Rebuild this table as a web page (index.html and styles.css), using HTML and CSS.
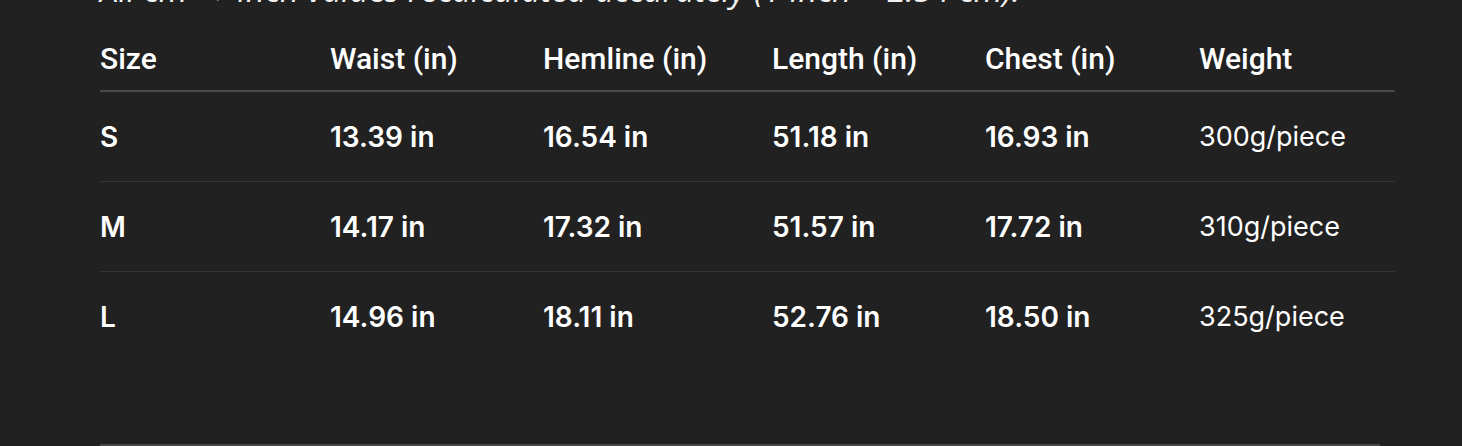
FILE: index.html
```html
<!DOCTYPE html>
<html lang="en">
<head>
<meta charset="utf-8">
<title>Size chart</title>
<link rel="stylesheet" href="styles.css">
</head>
<body>
<main class="page">
  <p class="note">All cm → inch values recalculated accurately (1 inch = 2.54 cm).</p>
  <table class="size-table">
    <thead>
      <tr>
        <th class="c-size">Size</th>
        <th class="c-waist">Waist (in)</th>
        <th class="c-hem">Hemline (in)</th>
        <th class="c-len">Length (in)</th>
        <th class="c-chest">Chest (in)</th>
        <th class="c-weight">Weight</th>
      </tr>
    </thead>
    <tbody>
      <tr>
        <td>S</td><td>13.39 in</td><td>16.54 in</td><td>51.18 in</td><td>16.93 in</td><td class="w">300g/piece</td>
      </tr>
      <tr>
        <td>M</td><td>14.17 in</td><td>17.32 in</td><td>51.57 in</td><td>17.72 in</td><td class="w">310g/piece</td>
      </tr>
      <tr>
        <td>L</td><td>14.96 in</td><td>18.11 in</td><td>52.76 in</td><td>18.50 in</td><td class="w">325g/piece</td>
      </tr>
    </tbody>
  </table>
  <div class="divider"></div>
</main>
</body>
</html>
```

FILE: styles.css
```css
html, body {
  margin: 0;
  padding: 0;
  background: #212121;
  overflow: hidden;
}

.page {
  padding: 0 67px 0 100px;
  margin-top: -25px;
  color: #ffffff;
  font-family: Inter, "Noto Sans", sans-serif;
}

.note {
  margin: 0;
  height: 30px;
  font-family: "Open Sans", sans-serif;
  font-style: italic;
  font-size: 33px;
  line-height: 30px;
  white-space: nowrap;
  color: #f2f2f2;
}

.size-table {
  width: 1295px;
  border-collapse: collapse;
  margin-top: 18px;
}

.size-table th {
  text-align: left;
  font-family: Roboto, sans-serif;
  font-weight: 500;
  font-size: 30px;
  height: 63px;
  padding: 4px 0 0 0;
  vertical-align: middle;
  border-bottom: 2px solid #484848;
}

.c-size { width: 230px; }
.c-waist { width: 213px; }
.c-hem { width: 229px; }
.c-len { width: 213px; }
.c-chest { width: 214px; }

.size-table td {
  height: 89px;
  padding: 0;
  font-size: 28px;
  font-weight: 600;
  vertical-align: middle;
  border-bottom: 1px solid #333333;
}

.size-table tbody tr:last-child td {
  border-bottom: none;
}

.size-table td.w {
  font-size: 27px;
  font-weight: 400;
}

.divider {
  margin-top: 83px;
  width: 1280px;
  height: 2px;
  background: #474747;
}
```
